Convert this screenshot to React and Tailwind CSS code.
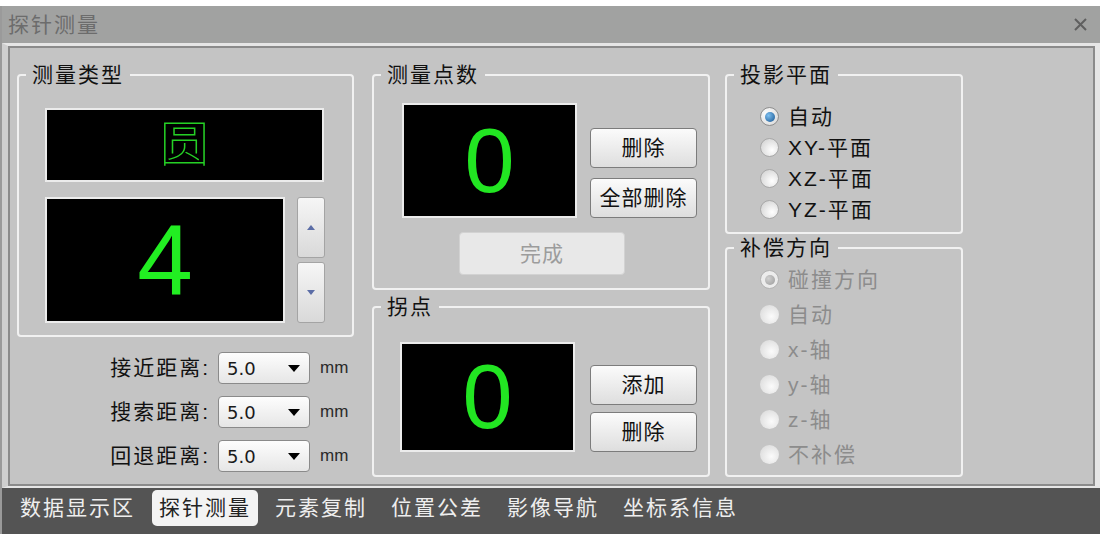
import React from "react";

const CJK = "font-['Liberation_Sans','Noto_Sans_CJK_SC',sans-serif]";

function Group({ title, className = "", children }) {
  return (
    <fieldset className={`border-2 border-[#f1f1f1] rounded-[4px] ${className}`}>
      <legend className="ml-[7px] px-[6px] text-[21px] leading-[24px] tracking-[2px] text-[#111]">{title}</legend>
      {children}
    </fieldset>
  );
}

function Display({ className = "", children }) {
  return (
    <div className={`bg-black border-2 border-[#ececec] flex items-center justify-center ${className}`}>
      {children}
    </div>
  );
}

function Btn({ children, className = "" }) {
  return (
    <div
      className={`w-[107px] h-[40px] rounded-[4px] border border-[#7c7c7c] bg-linear-to-b from-[#fbfbfb] to-[#dedede] flex items-center justify-center text-[21px] tracking-[1px] text-[#111] ${className}`}
    >
      {children}
    </div>
  );
}

function Select() {
  return (
    <div className="w-[92px] h-[32px] rounded-[4px] border border-[#8a8a8a] bg-linear-to-b from-[#fdfdfd] to-[#e6e6e6] flex items-center justify-between pl-[8px] pr-[9px]">
      <span className="text-[18px] text-[#1a1a1a] font-['DejaVu_Sans',sans-serif]">5.0</span>
      <svg width="12" height="7" viewBox="0 0 12 7">
        <polygon points="0,0 12,0 6,7" fill="#000" />
      </svg>
    </div>
  );
}

function Radio({ state }) {
  if (state === "on") {
    return (
      <div className="w-[19px] h-[19px] rounded-full border border-[#8e8e8e] bg-radial-[at_35%_35%] from-white to-[#d4d4d4] flex items-center justify-center">
        <div className="w-[10px] h-[10px] rounded-full bg-radial-[at_35%_35%] from-[#7fc0f0] to-[#15538f]" />
      </div>
    );
  }
  if (state === "off") {
    return (
      <div className="w-[19px] h-[19px] rounded-full border border-[#a8a8a8] bg-radial-[at_65%_65%] from-white to-[#cdcdcd]" />
    );
  }
  if (state === "dison") {
    return (
      <div className="w-[19px] h-[19px] rounded-full border border-[#b2b2b2] bg-[#ececec] flex items-center justify-center">
        <div className="w-[10px] h-[10px] rounded-full bg-radial-[at_35%_35%] from-[#d0d0d0] to-[#9a9a9a]" />
      </div>
    );
  }
  return (
    <div className="w-[19px] h-[19px] rounded-full bg-radial-[at_60%_60%] from-[#fbfbfb] to-[#d6d6d6]" />
  );
}

function RadioRow({ state, label, h, disabled }) {
  return (
    <div className={`flex items-center gap-[9px] pl-[33px] ${h}`}>
      <Radio state={state} />
      <span className={`text-[21px] leading-[24px] tracking-[2px] ${disabled ? "text-[#8c8c8c]" : "text-[#111]"}`}>{label}</span>
    </div>
  );
}

function DistRow({ label }) {
  return (
    <div className="flex items-center h-[32px]">
      <span className="w-[193px] text-right text-[21px] leading-[24px] tracking-[2px] text-[#111]">{label}</span>
      <div className="ml-[8px]">
        <Select />
      </div>
      <span className="ml-[10px] text-[17px] text-[#2a2a2a]">mm</span>
    </div>
  );
}

export default function App() {
  const tabs = ["数据显示区", "探针测量", "元素复制", "位置公差", "影像导航", "坐标系信息"];
  return (
    <div className={`w-[1120px] h-[534px] bg-white pt-[6px] ${CJK}`}>
      <div className="w-[1100px] h-[528px] flex flex-col border-l-2 border-[#9a9a9a] bg-[#c4c4c4]">
        {/* title bar */}
        <div className="h-[37px] bg-[#a1a2a1] flex items-center justify-between pl-[6px] pr-[13px]">
          <span className="text-[21px] tracking-[2px] text-[#6c6c6c]">探针测量</span>
          <svg width="13" height="13" viewBox="0 0 13 13">
            <path d="M1 1 L12 12 M12 1 L1 12" stroke="#5f5f5f" strokeWidth="2" />
          </svg>
        </div>
        {/* content */}
        <div className="flex-1 border-t-[3px] border-l-[6px] border-r-[5px] border-b-2 border-[#e6e6e6] border-l-[#cfcfcf]">
          <div className="h-full border-2 border-[#8b8b8b] bg-[#c4c4c4] flex pl-[7px] pt-[15px] gap-[18px]">
            {/* col1 */}
            <div className="w-[337px] flex flex-col">
              <Group title="测量类型" className="pb-[12px]">
                <Display className="ml-[26px] mt-[21px] w-[279px] h-[74px]">
                  <span className="text-[50px] leading-none text-[#25cf25] font-thin">圆</span>
                </Display>
                <div className="flex ml-[26px] mt-[15px]">
                  <Display className="w-[240px] h-[126px]">
                    <span className="text-[100px] leading-none text-[#22ee22] font-['Liberation_Sans',sans-serif]">4</span>
                  </Display>
                  <div className="ml-[12px] w-[28px] flex flex-col gap-[4px]">
                    <div className="h-[61px] rounded-[3px] border border-[#a4a4a4] bg-linear-to-b from-[#f6f6f6] to-[#d9d9d9] flex items-center justify-center">
                      <svg width="8" height="5" viewBox="0 0 8 5"><polygon points="0,5 8,5 4,0" fill="#5b6da6" /></svg>
                    </div>
                    <div className="h-[61px] rounded-[3px] border border-[#a4a4a4] bg-linear-to-b from-[#f6f6f6] to-[#d9d9d9] flex items-center justify-center">
                      <svg width="8" height="5" viewBox="0 0 8 5"><polygon points="0,0 8,0 4,5" fill="#5b6da6" /></svg>
                    </div>
                  </div>
                </div>
              </Group>
              <div className="mt-[15px] flex flex-col gap-[12px]">
                <DistRow label="接近距离:" />
                <DistRow label="搜索距离:" />
                <DistRow label="回退距离:" />
              </div>
            </div>
            {/* col2 */}
            <div className="w-[338px] flex flex-col">
              <Group title="测量点数" className="pb-[13px]">
                <div className="flex ml-[28px] mt-[16px]">
                  <Display className="w-[175px] h-[115px]">
                    <span className="text-[90px] leading-none text-[#22e622] font-['Liberation_Sans',sans-serif]">0</span>
                  </Display>
                  <div className="ml-[13px] flex flex-col gap-[10px] self-end">
                    <Btn>删除</Btn>
                    <Btn className="tracking-[0px]">全部删除</Btn>
                  </div>
                </div>
                <div className="ml-[85px] mt-[14px] w-[166px] h-[43px] rounded-[4px] border border-[#d2d2d2] bg-[#e8e8e8] flex items-center justify-center text-[21px] tracking-[1px] text-[#9c9c9c]">
                  完成
                </div>
              </Group>
              <Group title="拐点" className="mt-[5px] pb-[23px]">
                <div className="flex ml-[26px] mt-[23px]">
                  <Display className="w-[175px] h-[110px]">
                    <span className="text-[90px] leading-none text-[#22e622] font-['Liberation_Sans',sans-serif]">0</span>
                  </Display>
                  <div className="ml-[15px] flex flex-col gap-[7px] self-end">
                    <Btn>添加</Btn>
                    <Btn>删除</Btn>
                  </div>
                </div>
              </Group>
            </div>
            {/* col3 */}
            <div className="ml-[-3px] w-[238px] flex flex-col">
              <Group title="投影平面" className="pb-[7px]">
                <div className="mt-[14px] flex flex-col">
                  <RadioRow state="on" label="自动" h="h-[31px]" />
                  <RadioRow state="off" label="XY-平面" h="h-[31px]" />
                  <RadioRow state="off" label="XZ-平面" h="h-[31px]" />
                  <RadioRow state="off" label="YZ-平面" h="h-[31px]" />
                </div>
              </Group>
              <Group title="补偿方向" className="mt-[2px] pb-[3px]">
                <div className="mt-[2px] flex flex-col">
                  <RadioRow state="dison" label="碰撞方向" h="h-[35px]" disabled />
                  <RadioRow state="dis" label="自动" h="h-[35px]" disabled />
                  <RadioRow state="dis" label="x-轴" h="h-[35px]" disabled />
                  <RadioRow state="dis" label="y-轴" h="h-[35px]" disabled />
                  <RadioRow state="dis" label="z-轴" h="h-[35px]" disabled />
                  <RadioRow state="dis" label="不补偿" h="h-[35px]" disabled />
                </div>
              </Group>
            </div>
          </div>
        </div>
        {/* tab bar */}
        <div className="h-[46px] bg-[#545454] flex items-start pl-[11px] pt-[2px] gap-[10px]">
          {tabs.map((t, i) => (
            <div
              key={t}
              className={`h-[36px] px-[7px] flex items-center text-[21px] tracking-[2px] ${
                i === 1 ? "bg-[#f3f3f3] text-[#222] rounded-[5px]" : "text-[#eeeeee]"
              }`}
            >
              {t}
            </div>
          ))}
        </div>
      </div>
    </div>
  );
}
